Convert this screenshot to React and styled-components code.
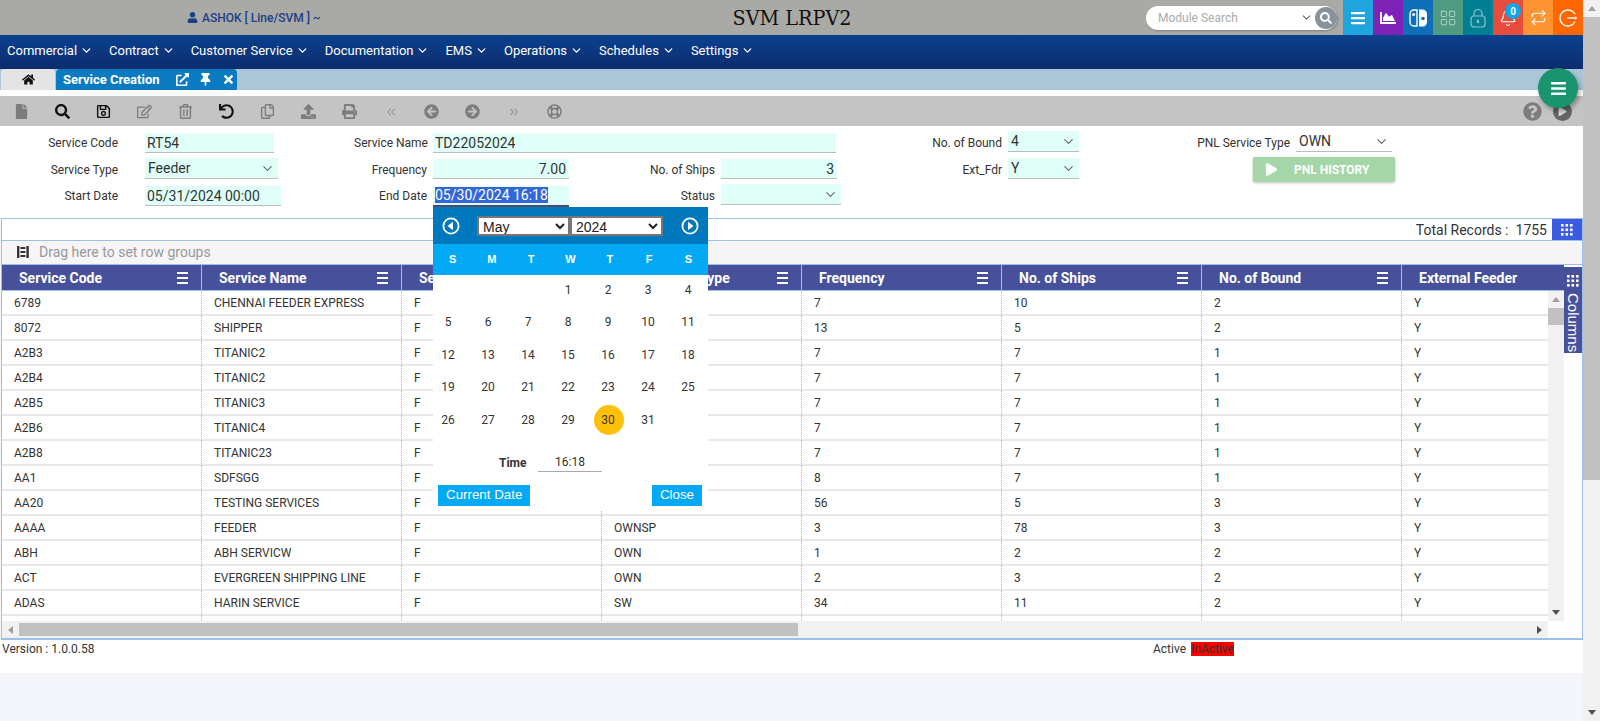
import React from "react";
import styled, { createGlobalStyle } from "styled-components";
import {
  FaUser, FaHome, FaExternalLinkAlt, FaThumbtack, FaTimes, FaFile, FaSearch, FaRegSave, FaRegEdit,
  FaRegTrashAlt, FaUndo, FaRegCopy, FaUpload, FaPrint,
  FaArrowCircleLeft, FaArrowCircleRight, FaRegLifeRing, FaQuestionCircle, FaPlay, FaChartArea, FaBars,
} from "react-icons/fa";
import { ChevronDown, ChevronsLeft, ChevronsRight, Bell, Repeat, LayoutGrid } from "lucide-react";

const GlobalStyle = createGlobalStyle`
html, body { margin: 0; padding: 0; height: 721px; overflow: hidden; }
body { font-family: Roboto, "Liberation Sans", sans-serif; font-size: 12px; color: #333; }
* { box-sizing: border-box; }
`;

const Page = styled.div`
  display: flex;
  width: 1600px;
  height: 721px;
`;
const Main = styled.div`
  width: 1583px;
  height: 721px;
  display: flex;
  flex-direction: column;
  background: #f4f5fa;
  position: relative;
`;
const Triangle = styled.span`
  width: 0;
  height: 0;
  display: block;
  border: 4px solid transparent;
  ${(p) => (p.$dir === "up" ? `border-bottom: 5px solid ${p.$color}; border-top: 0;` : "")}
  ${(p) => (p.$dir === "down" ? `border-top: 5px solid ${p.$color}; border-bottom: 0;` : "")}
  ${(p) => (p.$dir === "left" ? `border-right: 5px solid ${p.$color}; border-left: 0;` : "")}
  ${(p) => (p.$dir === "right" ? `border-left: 5px solid ${p.$color}; border-right: 0;` : "")}
`;
const PageScroll = styled.div`
  width: 17px;
  height: 721px;
  background: #f1f1f1;
  display: flex;
  flex-direction: column;
  align-items: center;
`;
const ScrollCap = styled.div`
  height: 17px;
  display: flex;
  align-items: center;
  justify-content: center;
`;
const PageThumb = styled.div`
  width: 17px;
  height: 463px;
  background: #c1c1c1;
  margin-bottom: auto;
`;

/* top bar */
const TopBar = styled.div`
  height: 35px;
  background: #a9aaa6;
  display: grid;
  grid-template-columns: 1fr 240px 1fr;
  align-items: center;
`;
const UserInfo = styled.div`
  display: flex;
  align-items: center;
  gap: 4px;
  padding-left: 187px;
  color: #1d3f86;
  font-weight: 500;
  font-size: 12px;
`;
const Title = styled.div`
  font-family: "DejaVu Serif", "Liberation Serif", serif;
  font-size: 20px;
  text-align: center;
  color: #111;
  transform: scaleX(0.96);
`;
const TopRight = styled.div`
  display: flex;
  justify-content: flex-end;
  align-items: center;
  height: 35px;
`;
const SearchBox = styled.div`
  width: 191px;
  height: 24px;
  margin-right: 6px;
  background: #fff;
  border-radius: 12px;
  box-shadow: 1px 1px 2px rgba(0, 0, 0, 0.25);
  display: flex;
  align-items: center;
  padding-left: 12px;
  font-size: 12px;
  color: #aaa;
`;
const SearchText = styled.span`
  flex: 1;
`;
const SearchBtn = styled.span`
  width: 22px;
  height: 22px;
  border-radius: 50%;
  margin-left: 2px;
  background: #87929b;
  color: #fff;
  display: flex;
  align-items: center;
  justify-content: center;
  font-size: 12px;
`;
const Tile = styled.div`
  width: 30px;
  height: 35px;
  background: ${(p) => p.$bg};
  color: ${(p) => p.$fg || "#fff"};
  display: flex;
  align-items: center;
  justify-content: center;
  position: relative;
  font-size: 16px;
`;
const Badge = styled.span`
  position: absolute;
  top: 3px;
  left: 12px;
  width: 16px;
  height: 16px;
  border-radius: 50%;
  background: #12a5ea;
  color: #fff;
  font-size: 10px;
  font-weight: 700;
  display: flex;
  align-items: center;
  justify-content: center;
`;

/* nav */
const NavBar = styled.div`
  height: 34px;
  background: linear-gradient(#0a418f, #0d2c6e);
  display: flex;
  align-items: center;
  padding: 0 0 3px 7px;
`;
const NavItem = styled.div`
  display: flex;
  align-items: center;
  gap: 3px;
  color: #fff;
  font-size: 13px;
  margin-right: 16px;
`;

/* tabs */
const TabBar = styled.div`
  height: 21px;
  background: #abc6d9;
  display: flex;
  padding-left: 1px;
  position: relative;
`;
const HomeTab = styled.div`
  width: 54px;
  background: #e4e4e4;
  border-radius: 4px 4px 0 0;
  display: flex;
  align-items: center;
  justify-content: center;
  color: #111;
  font-size: 13px;
`;
const ActiveTab = styled.div`
  width: 181px;
  margin-left: 1px;
  background: #0a7bc2;
  border-radius: 4px 4px 0 0;
  color: #fff;
  display: flex;
  align-items: center;
  padding-left: 7px;
  font-size: 13px;
  font-weight: 700;
`;
const TabLabel = styled.span`
  width: 113px;
`;
const TabIcons = styled.span`
  display: flex;
  align-items: center;
  gap: 10px;
  font-size: 13px;
`;
const Fab = styled.div`
  position: absolute;
  right: 5px;
  top: -1px;
  width: 40px;
  height: 40px;
  border-radius: 50%;
  background: #1a936f;
  color: #fff;
  display: flex;
  align-items: center;
  justify-content: center;
  font-size: 17px;
  box-shadow: 2px 3px 5px rgba(0, 0, 0, 0.35);
  z-index: 5;
`;
const Gap = styled.div`
  height: 6px;
  background: #fff;
`;

/* toolbar */
const Toolbar = styled.div`
  height: 30px;
  background: #c4c4c4;
  display: flex;
  align-items: center;
  padding: 1px 0 0 1px;
`;
const ToolBtn = styled.span`
  width: 41px;
  display: flex;
  justify-content: center;
  font-size: 15px;
  color: ${(p) => (p.$on ? "#111" : "#7d7d7d")};
`;
const ToolRight = styled.div`
  margin-left: auto;
  padding-right: 11px;
  display: flex;
  gap: 11px;
  font-size: 19px;
`;
const HelpIcon = styled.span`
  display: flex;
  color: #7d7d7d;
`;
const PlayDisc = styled.span`
  width: 19px;
  height: 19px;
  border-radius: 50%;
  background: #666;
  color: #ddd;
  font-size: 9px;
  display: flex;
  align-items: center;
  justify-content: center;
`;

/* form */
const Form = styled.div`
  height: 92px;
  background: #fff;
  display: grid;
  grid-template-columns: 145px 136px 152px 136px 152px 120px 167px 71px 217px 96px;
  grid-template-rows: 30px 27px 35px;
`;
const Label = styled.div`
  height: 20px;
  margin-top: ${(p) => p.$top}px;
  padding-right: ${(p) => p.$pad || 6}px;
  line-height: 20px;
  text-align: right;
  font-size: 12px;
  color: #333;
  grid-column: ${(p) => p.$col || "auto"};
  align-self: start;
`;
const Input = styled.input`
  display: block;
  height: 20px;
  width: ${(p) => p.$w}px;
  margin-top: ${(p) => p.$top}px;
  padding: 0 3px 0 2px;
  border: 0;
  border-bottom: 1px solid #bbb;
  background: #e0fff9;
  font-family: inherit;
  font-size: 14px;
  color: #333;
  outline: none;
  text-align: ${(p) => (p.$right ? "right" : "left")};
  grid-column: ${(p) => p.$span || "auto"};
  align-self: start;
`;
const Select = styled.div`
  height: 21px;
  width: ${(p) => p.$w}px;
  margin-top: ${(p) => p.$top}px;
  padding: 0 3px 0 3px;
  border-bottom: 1px solid #bbb;
  background: ${(p) => p.$bg || "#e0fff9"};
  font-size: 14px;
  color: #333;
  display: flex;
  align-items: center;
  justify-content: space-between;
  align-self: start;
`;
const DateCell = styled.div`
  position: relative;
  margin-top: 3px;
  height: 21px;
  background: #e0fff9;
  border-bottom: 2px solid #4a4a6a;
  padding-left: 2px;
  font-size: 14px;
  line-height: 19px;
  align-self: start;
`;
const Selected = styled.span`
  background: #3367d6;
  color: #fff;
`;
const HistoryBtn = styled.div`
  grid-column: 9 / 11;
  justify-self: end;
  margin: 1px -3px 0 0;
  width: 142px;
  height: 25px;
  border-radius: 2px;
  background: #a5d6a7;
  box-shadow: 0 1px 3px rgba(0, 0, 0, 0.25);
  color: #fff;
  font-size: 12px;
  font-weight: 700;
  display: flex;
  align-items: center;
  padding-left: 12px;
  gap: 16px;
`;
const HistoryIcon = styled.span`
  display: flex;
  font-size: 13px;
`;

/* date popup */
const Popup = styled.div`
  position: absolute;
  top: 21px;
  left: 0;
  width: 275px;
  height: 303px;
  z-index: 10;
  background: #fff;
  color: #333;
`;
const PopupHead = styled.div`
  height: 37px;
  background: #0078bd;
  display: grid;
  grid-template-columns: 44px 93px 93px 45px;
  align-items: center;
`;
const CircleBtn = styled.span`
  display: flex;
  justify-content: ${(p) => (p.$right ? "flex-end" : "flex-start")};
  padding: 0 9px;
`;
const CalSelect = styled.select`
  width: 93px;
  height: 20px;
  border: 2px solid #767676;
  background: #fff;
  padding: 0;
  font-family: "Liberation Sans", sans-serif;
  font-size: 14px;
  color: #222;
  border-radius: 0;
  outline: none;
`;
const CalHeads = styled.div`
  display: grid;
  grid-template-columns: repeat(7, 1fr);
  height: 31px;
  background: #03a9f4;
  color: #fff;
  font-family: "Liberation Sans", sans-serif;
  font-size: 11px;
  font-weight: 700;
  align-items: center;
  text-align: center;
`;
const CalDays = styled.div`
  display: grid;
  grid-template-columns: repeat(7, 1fr);
  grid-auto-rows: 32.5px;
  margin: -1px 0 0 -5px;
`;
const CalBody = styled.div`
  height: 177px;
`;
const Day = styled.div`
  display: flex;
  align-items: center;
  justify-content: center;
  font-size: 12px;
  color: #333;
  position: relative;
  z-index: 0;
  ${(p) =>
    p.$on
      ? `&::before { content: ""; position: absolute; left: 50%; top: 50%; width: 30px; height: 30px; margin: -15px 0 0 -14px; border-radius: 50%; background: #ffc107; z-index: -1; }`
      : ""}
`;
const TimeRow = styled.div`
  display: flex;
  align-items: center;
  height: 24px;
  padding-left: 66px;
`;
const TimeLabel = styled.span`
  width: 39px;
  font-weight: 700;
  font-size: 12px;
`;
const TimeValue = styled.span`
  width: 64px;
  height: 18px;
  line-height: 16px;
  text-align: center;
  border-bottom: 1px solid #aaa;
  font-size: 12px;
`;
const PopupFoot = styled.div`
  display: flex;
  justify-content: space-between;
  padding: 10px 6px 0 5px;
`;
const PopupBtn = styled.span`
  height: 21px;
  padding: 0 8px;
  background: #03a9f4;
  color: #fff;
  font-family: "Liberation Sans", sans-serif;
  font-size: 13.33px;
  line-height: 19px;
`;

/* grid */
const GridPanel = styled.div`
  height: 422px;
  margin-left: 1px;
  background: #fff;
  border: 1px solid #9dbfe8;
  border-bottom-width: 2px;
  display: flex;
  flex-direction: column;
  overflow: hidden;
`;
const TotalBar = styled.div`
  height: 21px;
  flex: none;
  display: flex;
  justify-content: flex-end;
  align-items: center;
  font-size: 14px;
  gap: 6px;
  color: #333;
`;
const TotalCount = styled.span`
  margin-left: 1px;
`;
const GridToggle = styled.span`
  width: 30px;
  height: 21px;
  margin-left: -1px;
  background: #3b5be0;
  color: #fff;
  display: flex;
  align-items: center;
  justify-content: center;
`;
const GroupBar = styled.div`
  height: 25px;
  flex: none;
  background: #f5f5f5;
  border-top: 1px solid #9dbfe8;
  border-bottom: 1px solid #9dbfe8;
  display: flex;
  align-items: center;
  padding: 0 0 1px 15px;
  gap: 10px;
  color: #999;
  font-size: 14px;
`;
const GridBody = styled.div`
  flex: 1;
  display: flex;
  min-height: 0;
`;
const GridMain = styled.div`
  width: 1562px;
  display: flex;
  flex-direction: column;
`;
const HeadRow = styled.div`
  height: 26px;
  flex: none;
  display: grid;
  grid-template-columns: repeat(8, 200px);
  width: 1562px;
  overflow: hidden;
  background: #47509a;
  border-bottom: 1px solid #9dbfe8;
`;
const HeadCell = styled.div`
  display: flex;
  align-items: center;
  justify-content: space-between;
  padding: 0 13px 0 17px;
  color: #fff;
  font-size: 14px;
  font-weight: 700;
  border-right: 1px solid #9dbfe8;
`;
const BodyArea = styled.div`
  flex: 1;
  display: flex;
  min-height: 0;
`;
const Rows = styled.div`
  width: 1546px;
  overflow: hidden;
`;
const Row = styled.div`
  height: 25px;
  display: grid;
  grid-template-columns: repeat(8, 200px);
  border-bottom: 2px solid #e8e8e8;
`;
const Cell = styled.div`
  padding-left: 12px;
  line-height: 25px;
  font-size: 12px;
  color: #333;
  white-space: nowrap;
  border-right: 1px dotted #9dbfe8;
`;
const VScroll = styled.div`
  width: 16px;
  background: #f1f1f1;
  display: flex;
  flex-direction: column;
  align-items: center;
`;
const VThumb = styled.div`
  width: 16px;
  height: 17px;
  margin-bottom: auto;
  background: #c1c1c1;
`;
const HScrollRow = styled.div`
  height: 17px;
  flex: none;
  display: flex;
`;
const HScroll = styled.div`
  width: 1546px;
  background: #f1f1f1;
  display: flex;
  align-items: center;
  justify-content: space-between;
`;
const HCap = styled.span`
  width: 17px;
  display: flex;
  justify-content: center;
`;
const HThumb = styled.div`
  width: 779px;
  height: 13px;
  margin-right: auto;
  background: #c1c1c1;
`;
const ColumnsRail = styled.div`
  width: 18px;
  margin-top: 2px;
  height: 86px;
  background: #47509a;
  color: #fff;
  display: flex;
  flex-direction: column;
  align-items: center;
  padding-top: 8px;
  gap: 6px;
  font-family: "Liberation Sans", sans-serif;
  font-size: 15px;
`;
const RailText = styled.span`
  writing-mode: vertical-rl;
  line-height: 18px;
`;
const Footer = styled.div`
  height: 33px;
  background: #fff;
  padding-top: 2px;
  display: flex;
  font-size: 12px;
`;
const Version = styled.span`
  margin-left: 2px;
  width: 1151px;
  line-height: 14px;
`;
const ActiveText = styled.span`
  line-height: 14px;
  width: 38px;
`;
const InactiveText = styled.span`
  height: 14px;
  line-height: 14px;
  background: #f00;
  width: 43px;
`;
const MenuLines = styled.span`
  display: block;
  width: 11px;
  height: 12px;
  border-top: 2px solid #fff;
  border-bottom: 2px solid #fff;
  position: relative;
  &::after {
    content: "";
    position: absolute;
    left: 0;
    right: 0;
    top: 3px;
    height: 2px;
    background: #fff;
  }
`;

const SwitchIcon = () => (
  <svg width="19" height="18" viewBox="0 0 19 18">
    <path d="M8 1H5a4 4 0 0 0-4 4v8a4 4 0 0 0 4 4h3z" fill="none" stroke="#fff" strokeWidth="1.4" />
    <circle cx="4.6" cy="5.5" r="1.5" fill="#fff" />
    <path d="M10 .5h3.5a4.5 4.5 0 0 1 4.5 4.5v8a4.5 4.5 0 0 1-4.5 4.5H10z" fill="#fff" />
    <circle cx="14" cy="9.5" r="1.8" fill="#0e6fb8" />
  </svg>
);
const LockIcon = () => (
  <svg width="16" height="20" viewBox="0 0 16 20" fill="none" stroke="#8cc6cf" strokeWidth="1.2">
    <path d="M4 8V5.5a4 4 0 0 1 8 0V8" />
    <rect x="1" y="8" width="14" height="11" rx="3" />
    <ellipse cx="8" cy="13.5" rx="1.2" ry="2" fill="#8cc6cf" stroke="none" />
  </svg>
);
const ExitIcon = () => (
  <svg width="20" height="20" viewBox="0 0 20 20" fill="none" stroke="#fff" strokeWidth="1.3">
    <path d="M17 6.2A8 8 0 1 0 17 13.8" />
    <path d="M9 10h10" />
    <path d="M17.5 8.5v3" />
  </svg>
);
const GridDots = () => (
  <svg width="12" height="12" viewBox="0 0 12 12" fill="currentColor">
    {[0, 4.5, 9].map((y) => [0, 4.5, 9].map((x) => <rect key={`${x}${y}`} x={x} y={y} width="2.6" height="2.6" />))}
  </svg>
);
const RowGroupIcon = () => (
  <svg width="12" height="12" viewBox="0 0 12 12" fill="#333">
    <rect x="0" y="0" width="2.4" height="12" />
    <rect x="9.4" y="0" width="2.4" height="12" />
    <rect x="3.4" y="1" width="5" height="2" />
    <rect x="3.4" y="5" width="5" height="2" />
    <rect x="3.4" y="9" width="5" height="2" />
  </svg>
);
const CalArrow = ({ right }) => (
  <svg width="18" height="18" viewBox="0 0 18 18">
    <circle cx="9" cy="9" r="7.6" fill="none" stroke="#fff" strokeWidth="1.8" />
    <path d={right ? "M7 4.8 12.5 9 7 13.2z" : "M11 4.8 5.5 9 11 13.2z"} fill="#fff" />
  </svg>
);
const DoubleLeft = () => <ChevronsLeft size={14} strokeWidth={1.5} color="#777" />;
const DoubleRight = () => <ChevronsRight size={14} strokeWidth={1.5} color="#777" />;

const menus = ["Commercial", "Contract", "Customer Service", "Documentation", "EMS", "Operations", "Schedules", "Settings"];
const columns = ["Service Code", "Service Name", "Service Type", "PNL Service Type", "Frequency", "No. of Ships", "No. of Bound", "External Feeder"];
const rows = [
  ["6789", "CHENNAI FEEDER EXPRESS", "F", "OWN", "7", "10", "2", "Y"],
  ["8072", "SHIPPER", "F", "OWN", "13", "5", "2", "Y"],
  ["A2B3", "TITANIC2", "F", "OWN", "7", "7", "1", "Y"],
  ["A2B4", "TITANIC2", "F", "OWN", "7", "7", "1", "Y"],
  ["A2B5", "TITANIC3", "F", "OWN", "7", "7", "1", "Y"],
  ["A2B6", "TITANIC4", "F", "OWN", "7", "7", "1", "Y"],
  ["A2B8", "TITANIC23", "F", "OWN", "7", "7", "1", "Y"],
  ["AA1", "SDFSGG", "F", "OWN", "8", "7", "1", "Y"],
  ["AA20", "TESTING SERVICES", "F", "OWN", "56", "5", "3", "Y"],
  ["AAAA", "FEEDER", "F", "OWNSP", "3", "78", "3", "Y"],
  ["ABH", "ABH SERVICW", "F", "OWN", "1", "2", "2", "Y"],
  ["ACT", "EVERGREEN SHIPPING LINE", "F", "OWN", "2", "3", "2", "Y"],
  ["ADAS", "HARIN SERVICE", "F", "SW", "34", "11", "2", "Y"],
  ["", "", "", "", "", "", "", ""],
];
const tools = [
  [FaFile], [FaSearch, true], [FaRegSave, true], [FaRegEdit], [FaRegTrashAlt], [FaUndo, true], [FaRegCopy],
  [FaUpload], [FaPrint], [DoubleLeft], [FaArrowCircleLeft], [FaArrowCircleRight], [DoubleRight], [FaRegLifeRing],
];
const days = [...Array(3).fill(""), ...Array.from({ length: 31 }, (_, i) => i + 1)];

const Chevron = () => <ChevronDown size={15} strokeWidth={1.8} color="#666" />;

const DatePopup = () => (
  <Popup>
    <PopupHead>
      <CircleBtn><CalArrow /></CircleBtn>
      <CalSelect defaultValue="May"><option>May</option></CalSelect>
      <CalSelect defaultValue="2024"><option>2024</option></CalSelect>
      <CircleBtn $right><CalArrow right /></CircleBtn>
    </PopupHead>
    <CalHeads>
      {["S", "M", "T", "W", "T", "F", "S"].map((d, i) => <span key={i}>{d}</span>)}
    </CalHeads>
    <CalBody>
      <CalDays>
        {days.map((d, i) => <Day key={i} $on={d === 30}>{d}</Day>)}
      </CalDays>
    </CalBody>
    <TimeRow>
      <TimeLabel>Time</TimeLabel>
      <TimeValue>16:18</TimeValue>
    </TimeRow>
    <PopupFoot>
      <PopupBtn>Current Date</PopupBtn>
      <PopupBtn>Close</PopupBtn>
    </PopupFoot>
  </Popup>
);

export default function App() {
  return (
    <Page>
      <GlobalStyle />
      <Main>
        <TopBar>
          <UserInfo><FaUser size={11} /> ASHOK [ Line/SVM ] ~</UserInfo>
          <Title>SVM LRPV2</Title>
          <TopRight>
            <SearchBox>
              <SearchText>Module Search</SearchText>
              <ChevronDown size={13} color="#666" />
              <SearchBtn><FaSearch /></SearchBtn>
            </SearchBox>
            <Tile $bg="#1fa5dd"><FaBars /></Tile>
            <Tile $bg="#7f22b8"><FaChartArea /></Tile>
            <Tile $bg="#0e6fb8"><SwitchIcon /></Tile>
            <Tile $bg="#4f9a80" $fg="#b5d6ca"><LayoutGrid size={18} strokeWidth={1.2} /></Tile>
            <Tile $bg="#017f92"><LockIcon /></Tile>
            <Tile $bg="#e84c3d"><Bell size={18} strokeWidth={1.6} /><Badge>0</Badge></Tile>
            <Tile $bg="#fd9331"><Repeat size={17} strokeWidth={1.5} /></Tile>
            <Tile $bg="#ff6600"><ExitIcon /></Tile>
          </TopRight>
        </TopBar>

        <NavBar>
          {menus.map((m) => (
            <NavItem key={m}>{m}<ChevronDown size={13} strokeWidth={2.4} /></NavItem>
          ))}
        </NavBar>

        <TabBar>
          <HomeTab><FaHome /></HomeTab>
          <ActiveTab>
            <TabLabel>Service Creation</TabLabel>
            <TabIcons><FaExternalLinkAlt /><FaThumbtack /><FaTimes /></TabIcons>
          </ActiveTab>
          <Fab><FaBars /></Fab>
        </TabBar>
        <Gap />

        <Toolbar>
          {tools.map(([Icon, on], i) => <ToolBtn key={i} $on={on}><Icon /></ToolBtn>)}
          <ToolRight>
            <HelpIcon><FaQuestionCircle /></HelpIcon>
            <PlayDisc><FaPlay /></PlayDisc>
          </ToolRight>
        </Toolbar>

        <Form>
          <Label $top={7} $pad={27}>Service Code</Label>
          <Input $top={7} $w={129} readOnly value="RT54" />
          <Label $top={7} $pad={5}>Service Name</Label>
          <Input $top={7} $w={403} $span="4 / 7" readOnly value="TD22052024" />
          <Label $top={7} $col="7">No. of Bound</Label>
          <Select $top={5} $w={71}>4<Chevron /></Select>
          <Label $top={7}>PNL Service Type</Label>
          <Select $top={5} $w={96} $bg="#fff">OWN<Chevron /></Select>

          <Label $top={4} $pad={27}>Service Type</Label>
          <Select $top={2} $w={133}>Feeder<Chevron /></Select>
          <Label $top={4}>Frequency</Label>
          <Input $top={3} $w={136} $right readOnly value="7.00" />
          <Label $top={4}>No. of Ships</Label>
          <Input $top={3} $w={116} $right readOnly value="3" />
          <Label $top={4}>Ext_Fdr</Label>
          <Select $top={2} $w={71}>Y<Chevron /></Select>
          <HistoryBtn>
            <HistoryIcon><FaPlay /></HistoryIcon>
            PNL HISTORY
          </HistoryBtn>

          <Label $top={3} $pad={27}>Start Date</Label>
          <Input $top={3} $w={136} readOnly value="05/31/2024 00:00" />
          <Label $top={3}>End Date</Label>
          <DateCell>
            <Selected>05/30/2024 16:18</Selected>
            <DatePopup />
          </DateCell>
          <Label $top={3}>Status</Label>
          <Select $top={1} $w={120}><span /><Chevron /></Select>
        </Form>

        <GridPanel>
          <TotalBar>
            Total Records :
            <TotalCount>1755</TotalCount>
            <GridToggle><GridDots /></GridToggle>
          </TotalBar>
          <GroupBar><RowGroupIcon /> Drag here to set row groups</GroupBar>
          <GridBody>
            <GridMain>
              <HeadRow>
                {columns.map((c, i) => (
                  <HeadCell key={c}>{c}{i < 7 && <MenuLines />}</HeadCell>
                ))}
              </HeadRow>
              <BodyArea>
                <Rows>
                  {rows.map((r, i) => (
                    <Row key={i}>
                      {r.map((v, j) => <Cell key={j}>{v}</Cell>)}
                    </Row>
                  ))}
                </Rows>
                <VScroll>
                  <ScrollCap><Triangle $dir="up" $color="#a0a0a0" /></ScrollCap>
                  <VThumb />
                  <ScrollCap><Triangle $dir="down" $color="#505050" /></ScrollCap>
                </VScroll>
              </BodyArea>
              <HScrollRow>
                <HScroll>
                  <HCap><Triangle $dir="left" $color="#a0a0a0" /></HCap>
                  <HThumb />
                  <HCap><Triangle $dir="right" $color="#505050" /></HCap>
                </HScroll>
              </HScrollRow>
            </GridMain>
            <ColumnsRail>
              <GridDots />
              <RailText>Columns</RailText>
            </ColumnsRail>
          </GridBody>
        </GridPanel>

        <Footer>
          <Version>Version : 1.0.0.58</Version>
          <ActiveText>Active</ActiveText>
          <InactiveText>InActive</InactiveText>
        </Footer>
      </Main>
      <PageScroll>
        <ScrollCap><Triangle $dir="up" $color="#a0a0a0" /></ScrollCap>
        <PageThumb />
        <ScrollCap><Triangle $dir="down" $color="#505050" /></ScrollCap>
      </PageScroll>
    </Page>
  );
}
